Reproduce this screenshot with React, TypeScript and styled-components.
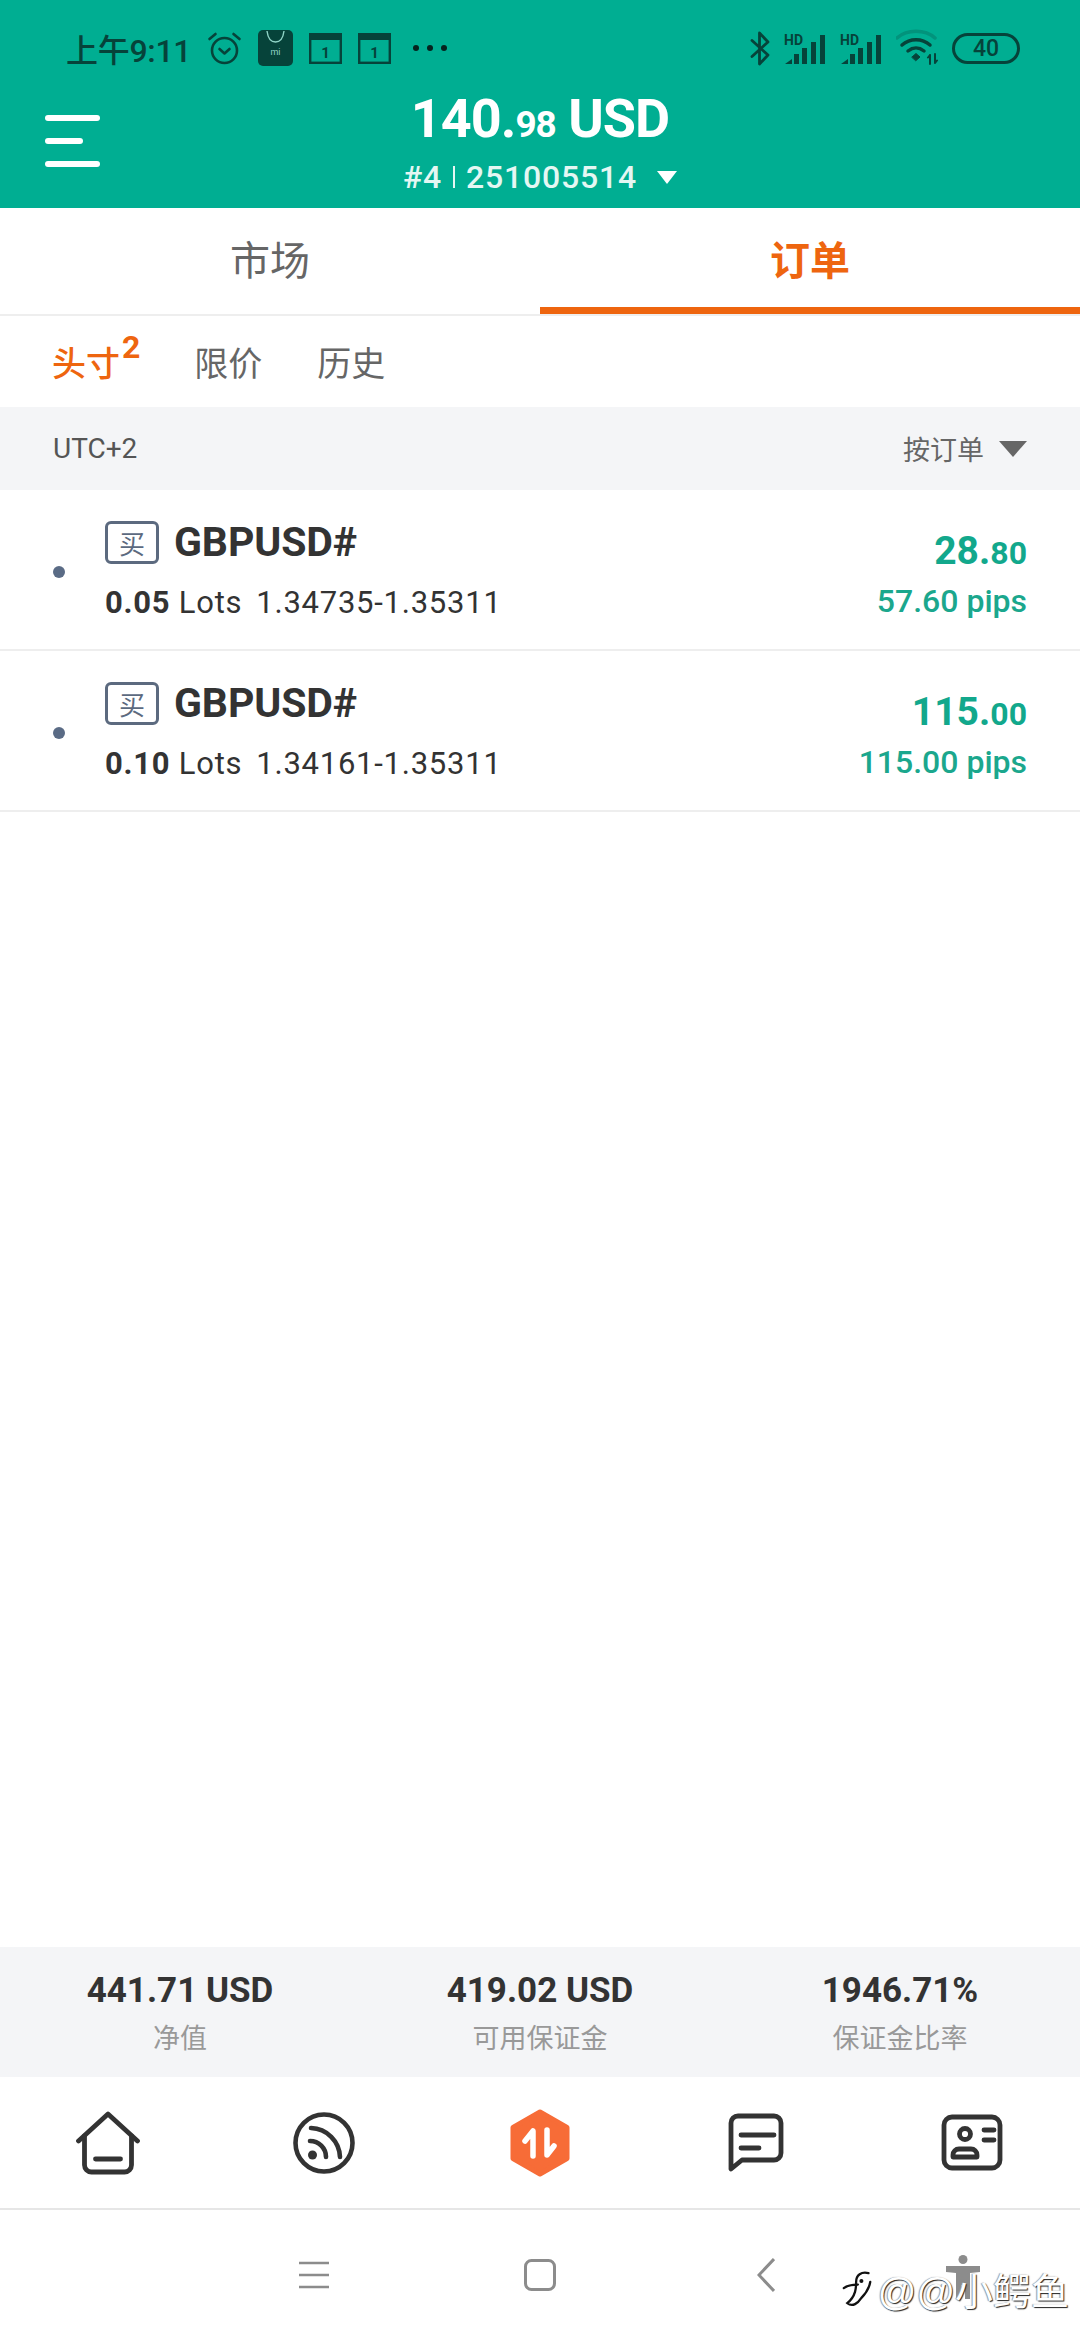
import React from "react"
import styled, { createGlobalStyle } from "styled-components"

const GlobalStyle = createGlobalStyle`
  html, body {
    margin: 0;
    padding: 0;
    background: #fff;
  }
  * {
    box-sizing: border-box;
  }
`

const TEAL = "#00ae92"
const ORANGE = "#ee650f"
const STATUS_INK = "#06433a"
const FONT = `Roboto, "Noto Sans CJK SC", sans-serif`

interface Order {
  lots: string
  range: string
  whole: string
  cents: string
  pips: string
}

const orders: Order[] = [
  { lots: "0.05", range: "1.34735-1.35311", whole: "28.", cents: "80", pips: "57.60 pips" },
  { lots: "0.10", range: "1.34161-1.35311", whole: "115.", cents: "00", pips: "115.00 pips" },
]

const stats = [
  { value: "441.71 USD", label: "净值" },
  { value: "419.02 USD", label: "可用保证金" },
  { value: "1946.71%", label: "保证金比率" },
]

const AlarmIcon = () => (
  <svg width="35" height="35" viewBox="0 0 35 35" fill="none" stroke={STATUS_INK} strokeWidth="2.6" strokeLinecap="round" strokeLinejoin="round">
    <circle cx="17.5" cy="19.5" r="12.5" />
    <path d="M12.5 18l5 4.5 5-4.500" />
    <path d="M2.5 8l6-5M32.5 8l-6-5" />
  </svg>
)

const MiStoreIcon = () => (
  <svg width="35" height="36" viewBox="0 0 35 36">
    <rect width="35" height="36" rx="5" fill={STATUS_INK} />
    <path d="M9 1c1 8 4 11 8.500 11S25 9 26 1" fill="none" stroke="#8fd4c6" strokeWidth="1.400" />
    <text x="17.500" y="25" textAnchor="middle" fontSize="9" fontFamily="Roboto, sans-serif" fill="#8fd4c6">mi</text>
  </svg>
)

const CalendarIcon = () => (
  <svg width="33" height="31" viewBox="0 0 33 31">
    <rect x="1.200" y="1.200" width="30.600" height="28.600" fill="none" stroke={STATUS_INK} strokeWidth="2.400" />
    <rect x="1" y="1" width="31" height="6" fill={STATUS_INK} />
    <text x="16.500" y="25" textAnchor="middle" fontSize="15" fontWeight="700" fontFamily="Roboto, sans-serif" fill={STATUS_INK}>1</text>
  </svg>
)

const BluetoothIcon = () => (
  <svg width="20" height="35" viewBox="0 0 20 35" fill="none" stroke={STATUS_INK} strokeWidth="2.800" strokeLinejoin="round" strokeLinecap="round">
    <path d="M2 9.500L18 24 9.500 33V2L18 11 2 25.500" />
  </svg>
)

// HD is set a little lower than the bars' top so its box stays inside the svg
const SignalIcon = () => (
  <svg width="42" height="34" viewBox="0 0 42 34">
    <text x="0" y="14" fontSize="14" fontWeight="700" fontFamily="Roboto, sans-serif" fill={STATUS_INK}>HD</text>
    <path d="M1 33l7-5v5z" fill={STATUS_INK} />
    <rect x="10" y="23" width="5" height="10" fill={STATUS_INK} />
    <rect x="18" y="17" width="5" height="16" fill={STATUS_INK} />
    <rect x="27" y="11" width="5" height="22" fill={STATUS_INK} />
    <rect x="36" y="4" width="5" height="29" fill={STATUS_INK} />
  </svg>
)

const WifiIcon = () => (
  <svg width="42" height="40" viewBox="0 0 42 40" fill="none" strokeLinecap="round">
    <path d="M1 10C11 1 29 1 39 10" stroke={STATUS_INK} strokeOpacity="0.25" strokeWidth="3.500" />
    <path d="M6 17c8-7 20-7 28 0" stroke={STATUS_INK} strokeWidth="3.500" />
    <path d="M12 23c5-4 11-4 16 0" stroke={STATUS_INK} strokeWidth="3.500" />
    <path d="M16 29l4-3.500 4 3.500-4 3.500z" fill={STATUS_INK} stroke={STATUS_INK} strokeWidth="1" />
    <path d="M34 27v9M32 29.500l2-2.500M39 26v9M39 35l2-2.500" stroke={STATUS_INK} strokeWidth="2" />
  </svg>
)

const HomeIcon = () => (
  <svg width="66" height="64" viewBox="0 0 65 64" fill="none" stroke="#333" strokeWidth="4.800" strokeLinecap="round" strokeLinejoin="round">
    <path d="M3 30L32.500 3 62 30" />
    <path d="M9 25v29a7 7 0 0 0 7 7h33a7 7 0 0 0 7-7V25" />
    <path d="M20 48h25" />
  </svg>
)

const FeedIcon = () => (
  <svg width="62" height="62" viewBox="0 0 62 62" fill="none" stroke="#333" strokeWidth="4.600" strokeLinecap="round">
    <circle cx="31" cy="31" r="28.500" />
    <path d="M17 29a16 16 0 0 1 16 16" />
    <path d="M18 16a30 30 0 0 1 29 29" />
    <circle cx="19.500" cy="43" r="4.500" fill="#333" stroke="none" />
  </svg>
)

const TradeIcon = () => (
  <svg width="60" height="68" viewBox="0 0 60 68">
    <path d="M30 3l27 15.500v31L30 65 3 49.500v-31z" fill="#f76c37" stroke="#f76c37" strokeWidth="5" strokeLinejoin="round" />
    <path d="M15 32l8-10v25M37 21v25l7-9" fill="none" stroke="#fff" strokeWidth="5.500" strokeLinecap="round" strokeLinejoin="round" />
  </svg>
)

const MessageIcon = () => (
  <svg width="56" height="60" viewBox="0 0 56 60" fill="none" stroke="#333" strokeWidth="4.800" strokeLinecap="round" strokeLinejoin="round">
    <path d="M10 3h36a7 7 0 0 1 7 7v30a7 7 0 0 1-7 7H14L3 56V10a7 7 0 0 1 7-7z" />
    <path d="M13 22h33M13 35h18" />
  </svg>
)

const CardIcon = () => (
  <svg width="62" height="57" viewBox="0 0 62 57" fill="none" stroke="#333" strokeWidth="4.800" strokeLinecap="round" strokeLinejoin="round">
    <rect x="3" y="3" width="56" height="51" rx="8" />
    <circle cx="24" cy="20" r="5.500" />
    <path d="M12 43v-2a6 6 0 0 1 6-6h12a6 6 0 0 1 6 6v2z" />
    <path d="M43 16h10M43 26h10" />
  </svg>
)

const MenuKeyIcon = () => (
  <svg width="30" height="28" viewBox="0 0 30 28" stroke="#8c8c8c" strokeWidth="2.600">
    <path d="M0 2h30M0 14h30M0 26h30" />
  </svg>
)

const HomeKeyIcon = () => (
  <svg width="32" height="32" viewBox="0 0 32 32" fill="none" stroke="#8c8c8c" strokeWidth="3">
    <rect x="1.500" y="1.500" width="29" height="29" rx="6" />
  </svg>
)

const BackKeyIcon = () => (
  <svg width="18" height="34" viewBox="0 0 18 34" fill="none" stroke="#8c8c8c" strokeWidth="3">
    <path d="M17 1L2 17l15 16" />
  </svg>
)

const AccessibilityIcon = () => (
  <svg width="34" height="44" viewBox="0 0 34 44" fill="#8c8c8c">
    <circle cx="17" cy="4.500" r="4.500" />
    <path d="M0 11h34v6l-10 1v26h-5V30h-4v14h-5V18L0 17z" />
  </svg>
)

const FishLogo = () => (
  <svg width="30" height="42" viewBox="0 0 34 42" fill="none" stroke="#111" strokeWidth="2.600" strokeLinecap="round">
    <path d="M30 3c-8-2-14 2-14 10 0 6 0 16-10 24 6 5 12 0 16-6 6-6 9-12 10-18" />
    <path d="M2 20c4-3 10-4 16-4" />
    <circle cx="22" cy="12" r="1" fill="#111" />
  </svg>
)

const App = () => (
  <>
    <GlobalStyle />
    <Page>
      <Header>
        <StatusBar>
          <StatusGroup>
            <StatusTime>上午9:11</StatusTime>
            <AlarmIcon />
            <MiStoreIcon />
            <CalendarIcon />
            <CalendarIcon />
            <MoreDots>
              <i />
              <i />
              <i />
            </MoreDots>
          </StatusGroup>
          <StatusIndicators>
            <BluetoothIcon />
            <SignalIcon />
            <SignalIcon />
            <WifiIcon />
            <Battery>40</Battery>
          </StatusIndicators>
        </StatusBar>
        <TitleRow>
          <Hamburger>
            <HamburgerLine />
            <HamburgerLine $short />
            <HamburgerLine />
          </Hamburger>
          <TitleBlock>
            <Balance>
              140.<BalanceCents>98</BalanceCents> USD
            </Balance>
            <Account>
              #4<AccountDivider />251005514
              <AccountCaret />
            </Account>
          </TitleBlock>
        </TitleRow>
      </Header>

      <MainTabs>
        <MainTab>市场</MainTab>
        <MainTab $active>订单</MainTab>
      </MainTabs>

      <SubTabs>
        <SubTab $active>
          头寸<SubTabCount>2</SubTabCount>
        </SubTab>
        <SubTab>限价</SubTab>
        <SubTab>历史</SubTab>
      </SubTabs>

      <FilterBar>
        <Timezone>UTC+2</Timezone>
        <SortControl>
          按订单
          <SortCaret />
        </SortControl>
      </FilterBar>

      <OrderList>
        {orders.map((order) => (
          <OrderRow key={order.range}>
            <OrderDot />
            <OrderInfo>
              <OrderTitle>
                <SideBadge>买</SideBadge>
                <OrderSymbol>GBPUSD#</OrderSymbol>
              </OrderTitle>
              <OrderDetail>
                <OrderLots>{order.lots}</OrderLots> Lots
                <OrderRange>{order.range}</OrderRange>
              </OrderDetail>
            </OrderInfo>
            <OrderResult>
              <Profit>
                {order.whole}
                <ProfitCents>{order.cents}</ProfitCents>
              </Profit>
              <Pips>{order.pips}</Pips>
            </OrderResult>
          </OrderRow>
        ))}
      </OrderList>

      <Summary>
        {stats.map((stat) => (
          <SummaryItem key={stat.label}>
            <SummaryValue>{stat.value}</SummaryValue>
            <SummaryLabel>{stat.label}</SummaryLabel>
          </SummaryItem>
        ))}
      </Summary>

      <BottomNav>
        <HomeIcon />
        <FeedIcon />
        <TradeIcon />
        <MessageIcon />
        <CardIcon />
      </BottomNav>

      <SystemNav>
        <MenuKeyIcon />
        <HomeKeyIcon />
        <BackKeyIcon />
      </SystemNav>

      <Watermark>
        <AccessibilityMark>
          <AccessibilityIcon />
        </AccessibilityMark>
        <FishLogo />
        <WatermarkText>@@小鳄鱼</WatermarkText>
      </Watermark>
    </Page>
  </>
)

export default App

const Page = styled.div`
  position: relative;
  display: flex;
  flex-direction: column;
  width: 1080px;
  height: 2340px;
  overflow: hidden;
  background: #fff;
  font-family: ${FONT};
`

const Header = styled.header`
  height: 208px;
  background: ${TEAL};
`

const StatusBar = styled.div`
  display: flex;
  justify-content: space-between;
  align-items: center;
  height: 96px;
  padding: 0 60px 0 66px;
`

const StatusGroup = styled.div`
  display: flex;
  align-items: center;
  gap: 16px;
`

const StatusIndicators = styled(StatusGroup)`
  gap: 14px;
`

const StatusTime = styled.span`
  font-size: 32px;
  font-weight: 500;
  color: ${STATUS_INK};
  letter-spacing: -0.3px;
`

const MoreDots = styled.span`
  display: flex;
  gap: 8px;
  margin-left: 6px;

  i {
    width: 6px;
    height: 6px;
    border-radius: 50%;
    background: #06231e;
  }
`

const Battery = styled.span`
  display: flex;
  justify-content: center;
  align-items: center;
  width: 68px;
  height: 31px;
  border: 3px solid ${STATUS_INK};
  border-radius: 16px;
  font-size: 23px;
  font-weight: 500;
  color: ${STATUS_INK};
`

const TitleRow = styled.div`
  display: grid;
  grid-template-columns: 1fr auto 1fr;
  align-items: center;
  padding: 0 45px;
`

const Hamburger = styled.div`
  display: flex;
  flex-direction: column;
  gap: 17px;
  margin-top: -10px;
`

const HamburgerLine = styled.span<{ $short?: boolean }>`
  width: ${(props) => (props.$short ? "38px" : "55px")};
  height: 6px;
  border-radius: 3px;
  background: #fff;
`

const TitleBlock = styled.div`
  display: flex;
  flex-direction: column;
  align-items: center;
  margin-top: -5px;
  color: #fff;
`

const Balance = styled.div`
  font-size: 54px;
  font-weight: 700;
  line-height: 56px;
  letter-spacing: -1px;
`

const BalanceCents = styled.span`
  font-size: 37px;
`

const Account = styled.div`
  display: flex;
  align-items: center;
  margin-top: 5px;
  font-size: 32px;
  font-weight: 500;
  line-height: 38px;
  letter-spacing: 0.8px;
  color: #e4f7f3;
`

const AccountDivider = styled.span`
  width: 2px;
  height: 22px;
  margin: 0 11px;
  background: #e4f7f3;
`

const AccountCaret = styled.span`
  width: 0;
  height: 0;
  margin-left: 20px;
  border-left: 10px solid transparent;
  border-right: 10px solid transparent;
  border-top: 13px solid #fff;
`

const MainTabs = styled.nav`
  display: grid;
  grid-template-columns: 1fr 1fr;
  height: 108px;
  border-bottom: 2px solid #eee;
`

const MainTab = styled.div<{ $active?: boolean }>`
  display: flex;
  justify-content: center;
  align-items: center;
  font-size: 40px;
  font-weight: ${(props) => (props.$active ? 700 : 400)};
  color: ${(props) => (props.$active ? ORANGE : "#666")};
  border-bottom: ${(props) => (props.$active ? `7px solid ${ORANGE}` : "7px solid transparent")};
`

const SubTabs = styled.div`
  display: flex;
  align-items: center;
  gap: 55px;
  height: 91px;
  padding: 0 52px;
`

const SubTab = styled.div<{ $active?: boolean }>`
  display: flex;
  font-size: 34px;
  font-weight: ${(props) => (props.$active ? 500 : 400)};
  color: ${(props) => (props.$active ? ORANGE : "#666")};
`

const SubTabCount = styled.sup`
  margin: -6px -1px 0 2px;
  font-size: 32px;
  font-weight: 700;
  line-height: 32px;
`

const FilterBar = styled.div`
  display: flex;
  justify-content: space-between;
  align-items: center;
  height: 83px;
  padding: 0 53px;
  background: #f4f5f7;
`

const Timezone = styled.span`
  font-size: 28px;
  color: #555;
`

const SortControl = styled.div`
  display: flex;
  align-items: center;
  gap: 15px;
  font-size: 27px;
  color: #666;
`

const SortCaret = styled.span`
  width: 0;
  height: 0;
  border-left: 14px solid transparent;
  border-right: 14px solid transparent;
  border-top: 16px solid #666;
`

const OrderList = styled.div`
  flex: 1;
`

const OrderRow = styled.div`
  display: flex;
  align-items: center;
  height: 161px;
  padding: 0 53px;
  border-bottom: 2px solid #eee;
`

const OrderDot = styled.span`
  width: 12px;
  height: 12px;
  margin: 4px 40px 0 0;
  border-radius: 50%;
  background: #5a6b85;
`

const OrderInfo = styled.div`
  flex: 1;
  display: flex;
  flex-direction: column;
  gap: 21px;
  margin-top: 2px;
`

const OrderTitle = styled.div`
  display: flex;
  align-items: center;
  gap: 15px;
`

const SideBadge = styled.span`
  display: flex;
  justify-content: center;
  align-items: center;
  width: 54px;
  height: 43px;
  border: 3px solid #5c6a7f;
  border-radius: 6px;
  font-size: 26px;
  color: #5c6a7f;
`

const OrderSymbol = styled.span`
  font-size: 41px;
  font-weight: 700;
  line-height: 43px;
  letter-spacing: -0.1px;
  color: #333;
`

const OrderDetail = styled.div`
  display: flex;
  align-items: baseline;
  font-size: 31px;
  line-height: 36px;
  letter-spacing: 0.75px;
  color: #333;
  white-space: pre;
`

const OrderLots = styled.span`
  font-weight: 700;
`

const OrderRange = styled.span`
  margin-left: 14px;
`

const OrderResult = styled.div`
  display: flex;
  flex-direction: column;
  align-items: flex-end;
  gap: 8px;
  margin-top: 10px;
`

const Profit = styled.div`
  font-size: 39px;
  font-weight: 700;
  line-height: 43px;
  color: #12a88c;
`

const ProfitCents = styled.span`
  font-size: 32px;
`

const Pips = styled.div`
  font-size: 32px;
  font-weight: 500;
  line-height: 36px;
  color: #1ba78d;
`

const Summary = styled.div`
  display: grid;
  grid-template-columns: repeat(3, 1fr);
  height: 130px;
  background: #f4f5f7;
`

const SummaryItem = styled.div`
  display: flex;
  flex-direction: column;
  align-items: center;
  padding-top: 24px;
`

const SummaryValue = styled.div`
  font-size: 35px;
  font-weight: 700;
  line-height: 40px;
  color: #333;
`

const SummaryLabel = styled.div`
  margin-top: 10px;
  font-size: 27px;
  line-height: 36px;
  color: #999;
`

const BottomNav = styled.nav`
  display: grid;
  grid-template-columns: repeat(5, 1fr);
  justify-items: center;
  align-items: center;
  height: 133px;
  border-bottom: 2px solid #e6e6e6;
`

const SystemNav = styled.div`
  display: grid;
  grid-template-columns: repeat(3, 226px);
  justify-content: center;
  justify-items: center;
  align-items: center;
  height: 130px;
`

const Watermark = styled.div`
  position: absolute;
  right: 11px;
  bottom: 24px;
  display: flex;
  align-items: center;
  gap: 6px;
`

const AccessibilityMark = styled.span`
  position: absolute;
  left: 104px;
  top: -6px;
`

const WatermarkText = styled.span`
  position: relative;
  font-size: 38px;
  font-family: "Liberation Sans", "Noto Sans CJK SC", sans-serif;
  color: #fff;
  text-shadow: 1px 1px 1px #222, -1px 0 1px #999;
`
